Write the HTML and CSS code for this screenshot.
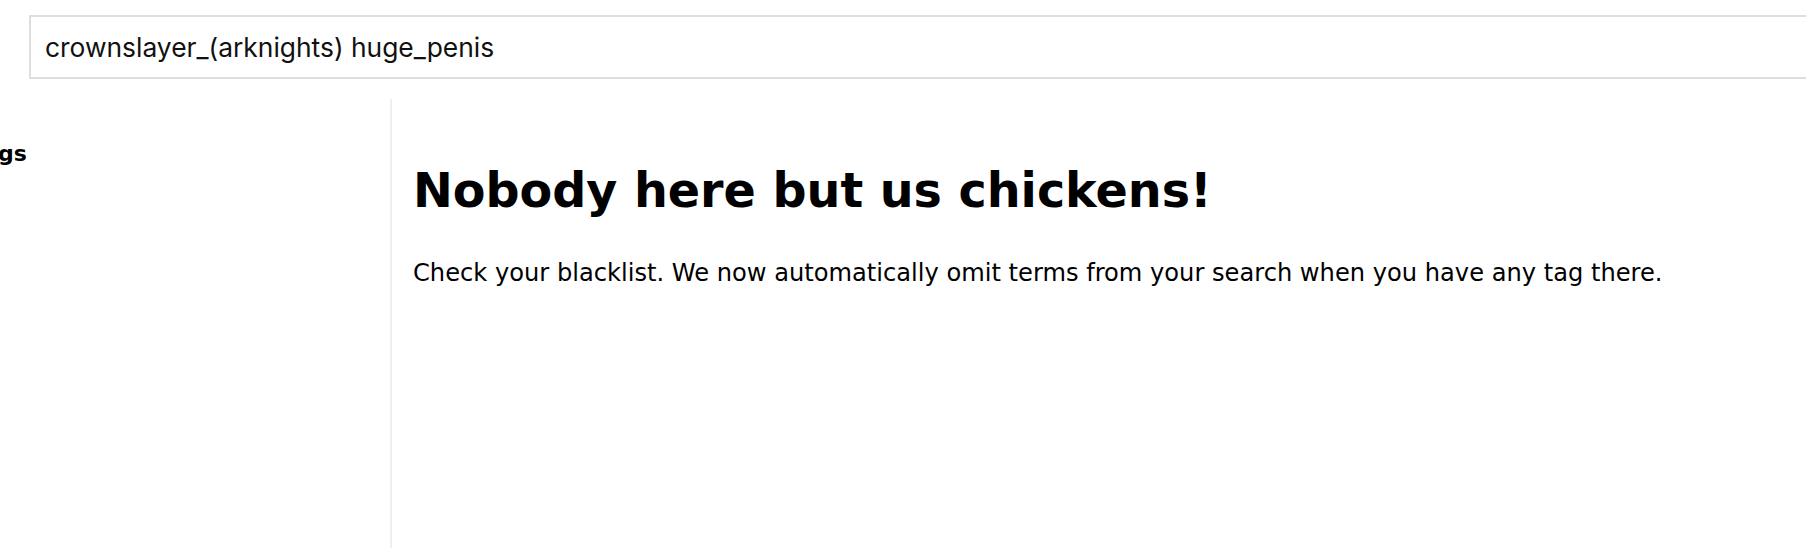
FILE: index.html
```html
<!DOCTYPE html>
<html lang="en">
<head>
    <meta charset="UTF-8">
    <title>Search</title>
    <link rel="stylesheet" href="styles.css">
</head>
<body>
    <!-- Search bar -->
    <form class="search-bar">
        <input type="text" class="search-input" name="tags" value="crownslayer_(arknights) huge_penis">
    </form>

    <div class="page">
        <aside class="sidebar">
            <h3 class="sidebar-title">Tags</h3>
        </aside>
        <main class="content">
            <h1>Nobody here but us chickens!</h1>
            <p>Check your blacklist. We now automatically omit terms from your search when you have any tag there.</p>
        </main>
    </div>
</body>
</html>
```

FILE: styles.css
```css
/* General Styling */
* {
    margin: 0;
    padding: 0;
    box-sizing: border-box;
}

body {
    font-family: 'DejaVu Sans', Verdana, sans-serif;
    background: #fff;
    color: #000;
    overflow: hidden;
    height: 548px;
}

.search-bar {
    padding: 15px 0 0 29px;
    width: 2000px;
}

.search-input {
    display: block;
    width: 100%;
    height: 64px;
    border: 2px solid #dedede;
    background: #fff;
    padding: 0 14px;
    font-family: Inter, 'Noto Sans', sans-serif;
    font-size: 26.4px;
    color: #111;
    outline: none;
}

.page {
    display: flex;
    margin-top: 20px;
}

.sidebar {
    width: 390px;
    flex-shrink: 0;
    padding-top: 42px;
}

.sidebar-title {
    font-size: 22px;
    font-weight: bold;
    margin-left: -29px;
}

.content {
    border-left: 2px solid #efefef;
    padding: 63px 0 0 21px;
    min-height: 470px;
}

.content h1 {
    font-size: 47.6px;
    font-weight: bold;
    line-height: 1.2;
    margin-bottom: 40px;
}

.content p {
    font-size: 24.15px;
}
```
